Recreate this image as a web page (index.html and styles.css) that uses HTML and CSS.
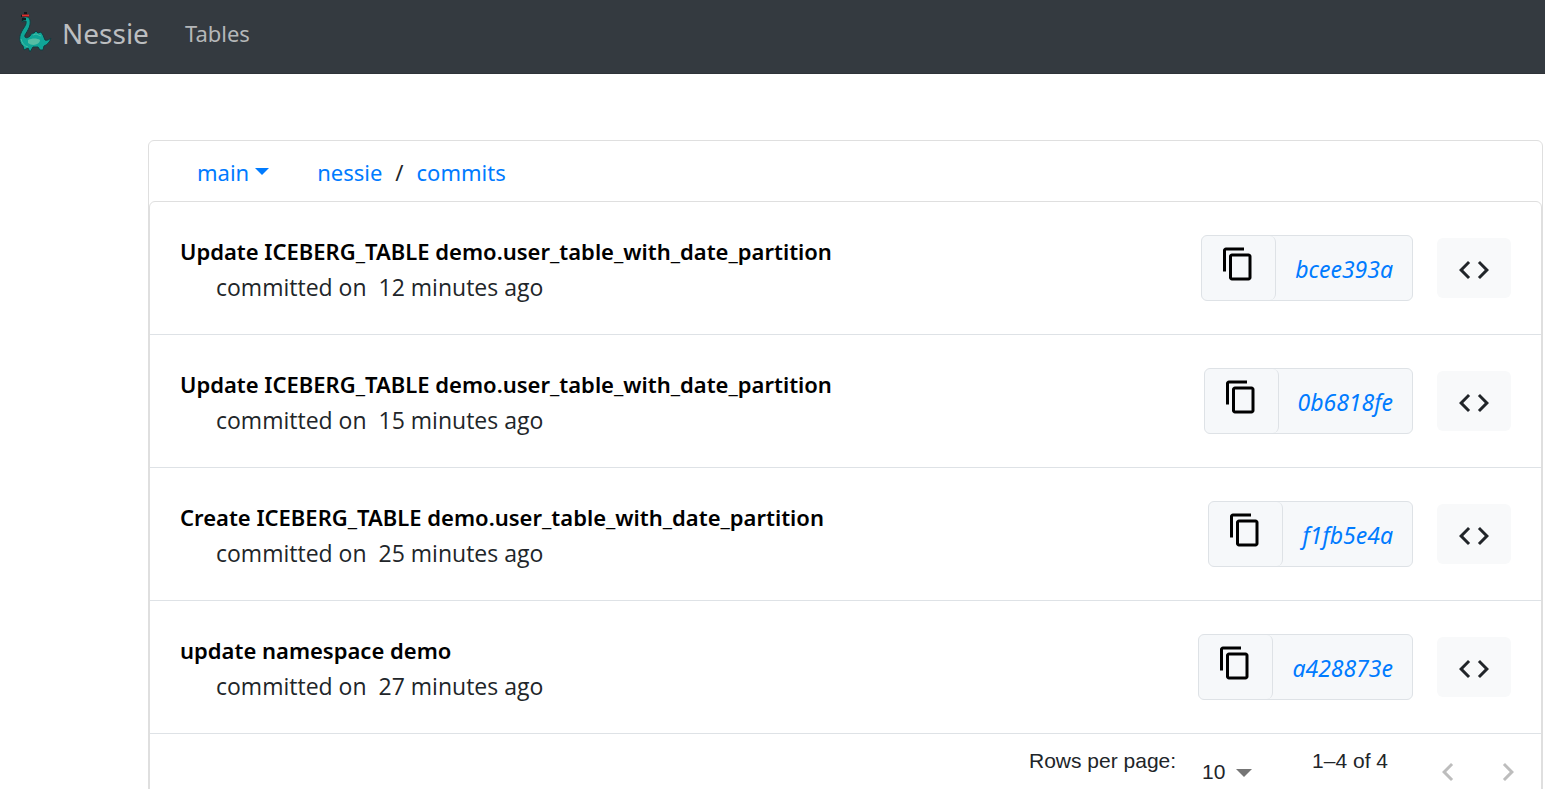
FILE: index.html
```html
<!DOCTYPE html>
<html lang="en">
<head>
<meta charset="utf-8">
<title>Nessie</title>
<link rel="stylesheet" href="styles.css">
</head>
<body>
<svg class="sprite" aria-hidden="true">
  <symbol id="copy" viewBox="0 0 24 24"><path d="M16 1H4c-1.100 0-2 .9-2 2v14h2V3h12V1zm3 4H8c-1.100 0-2 .9-2 2v14c0 1.100.9 2 2 2h11c1.100 0 2-.9 2-2V7c0-1.100-.9-2-2-2zm0 16H8V7h11v14z"/></symbol>
  <symbol id="code" viewBox="0 0 24 24"><path d="M9.400 16.600 4.800 12l4.600-4.600L8 6l-6 6 6 6 1.400-1.400zm5.200 0 4.600-4.600-4.600-4.600L16 6l6 6-6 6-1.400-1.400z"/></symbol>
</svg>
<nav class="navbar">
  <a class="brand" href="#">
    <svg class="logo" viewBox="0 0 36 44" aria-hidden="true">
      <path d="M6 8C8 5 13 5 14 9C15 15 12 19 9 24C8 27 11 28 14 25C15 23 16 22 18 22L20 20L22 22L25 21L27 24L29 29C31 30 34 28 35 27C34 31 31 34 28 35L27 39L24 39L22 36H17L14 41L12 37L8 39L7 35C3 32 3 26 5 22C7 17 11 14 10 10L6 11Z" fill="#10a597" stroke="#153c40" stroke-width="1"/>
      <path d="M12 29C16 27 21 27 24 29C24 33 17 36 12 32Z" fill="#55bda4"/>
      <path d="M5 28C6 32 8 35 12 36M17 24L20 23L25 25" fill="none" stroke="#48bba4" stroke-width="1"/>
      <path d="M5 4L8 3V1H11V3L13 4L13 6H5Z" fill="#14171b"/>
      <path d="M6 4.500H13" stroke="#df3030" stroke-width="2"/>
      <path d="M6 7H10V9L6 10Z" fill="#101b20"/>
    </svg>
    <span>Nessie</span>
  </a>
  <a class="nav-link" href="#">Tables</a>
</nav>
<main class="card">
  <header class="toolbar">
    <button class="branch" type="button">main<span class="caret"></span></button>
    <div class="crumbs"><a href="#">nessie</a><span class="slash">/</span><a href="#">commits</a></div>
  </header>
  <section class="commits">
    <article class="commit">
      <div class="info"><h2 class="title">Update ICEBERG_TABLE demo.user_table_with_date_partition</h2><p class="meta"><span>committed on</span><span>12 minutes ago</span></p></div>
      <div class="actions"><div class="hash-group"><button class="copy" type="button" aria-label="Copy hash"><svg><use href="#copy"/></svg></button><a class="hash" href="#">bcee393a</a></div><button class="browse" type="button" aria-label="Browse"><svg><use href="#code"/></svg></button></div>
    </article>
    <article class="commit">
      <div class="info"><h2 class="title">Update ICEBERG_TABLE demo.user_table_with_date_partition</h2><p class="meta"><span>committed on</span><span>15 minutes ago</span></p></div>
      <div class="actions"><div class="hash-group"><button class="copy" type="button" aria-label="Copy hash"><svg><use href="#copy"/></svg></button><a class="hash" href="#">0b6818fe</a></div><button class="browse" type="button" aria-label="Browse"><svg><use href="#code"/></svg></button></div>
    </article>
    <article class="commit">
      <div class="info"><h2 class="title">Create ICEBERG_TABLE demo.user_table_with_date_partition</h2><p class="meta"><span>committed on</span><span>25 minutes ago</span></p></div>
      <div class="actions"><div class="hash-group"><button class="copy" type="button" aria-label="Copy hash"><svg><use href="#copy"/></svg></button><a class="hash" href="#">f1fb5e4a</a></div><button class="browse" type="button" aria-label="Browse"><svg><use href="#code"/></svg></button></div>
    </article>
    <article class="commit">
      <div class="info"><h2 class="title">update namespace demo</h2><p class="meta"><span>committed on</span><span>27 minutes ago</span></p></div>
      <div class="actions"><div class="hash-group"><button class="copy" type="button" aria-label="Copy hash"><svg><use href="#copy"/></svg></button><a class="hash" href="#">a428873e</a></div><button class="browse" type="button" aria-label="Browse"><svg><use href="#code"/></svg></button></div>
    </article>
    <footer class="pagination">
      <label class="rows-label" for="rows">Rows per page:</label>
      <div class="select-wrap"><select id="rows"><option>10</option><option>25</option></select><span class="select-arrow"></span></div>
      <span class="range">1–4 of 4</span>
      <div class="pager">
        <button type="button" aria-label="Previous page" disabled><svg viewBox="0 0 24 24"><path d="M15.400 7.400 14 6l-6 6 6 6 1.400-1.400L10.800 12z"/></svg></button>
        <button type="button" aria-label="Next page" disabled><svg viewBox="0 0 24 24"><path d="M10 6 8.600 7.400l4.600 4.600-4.600 4.600L10 18l6-6z"/></svg></button>
      </div>
    </footer>
  </section>
</main>
</body>
</html>
```
FILE: styles.css
```css
* { box-sizing: border-box; }
body {
  margin: 0;
  overflow-x: hidden;
  background: #fff;
  color: #212529;
  font: 23px/36px "Segoe UI", "Noto Sans", sans-serif;
}
html { scrollbar-width: none; }
a { color: #007bff; text-decoration: none; }
button, select { margin: 0; padding: 0; border: 0; background: none; font: inherit; }
svg { display: block; fill: currentColor; }
.sprite { display: none; }
.navbar {
  display: flex;
  align-items: center;
  gap: 36px;
  height: 74px;
  padding: 0 16px 8px;
  background: #343a40;
  border-bottom: 1px solid #2e3338;
}
.brand { display: flex; align-items: center; gap: 10px; color: #bcbec0; font-size: 28px; }
.logo { width: 36px; height: 44px; }
.nav-link { color: #b4b7b9; font-size: 22px; }
.card {
  margin: 66px 2px 0 148px;
  border: 1px solid #dfdfdf;
  border-radius: 6px;
}
.toolbar { display: flex; align-items: center; gap: 48px; height: 60px; padding: 2px 48px 0; font-size: 22px; }
.branch { display: flex; align-items: center; gap: 6px; color: #007bff; }
.caret { margin-bottom: 2px; border: 7px solid transparent; border-top-color: currentColor; border-bottom: 0; }
.crumbs { display: flex; gap: 13px; }
.commits { border: 1px solid #dfdfdf; border-radius: 6px; }
.commit {
  display: flex;
  justify-content: space-between;
  align-items: flex-start;
  padding: 31px 30px 29px;
  border-bottom: 1px solid #dee2e6;
}
.title { margin: 0; color: #000; font-size: 22px; font-weight: 600; }
.meta { display: flex; gap: 12px; margin: 0; padding-left: 36px; font-family: "Segoe UI", "Open Sans", sans-serif; }
.actions { display: flex; align-items: center; gap: 24px; margin-top: 2px; }
.hash-group {
  display: flex;
  height: 66px;
  background: #f6f8fa;
  border: 1px solid #dee2e6;
  border-radius: 6px;
}
.copy {
  width: 74px;
  padding: 0 0 8px 18px;
  border-right: 1px solid #dee2e6;
  border-radius: 6px;
  color: #000;
}
.copy svg, .browse svg { width: 36px; height: 36px; }
.hash { padding: 15px 19px 0; font-style: italic; }
.browse {
  width: 74px;
  height: 60px;
  padding: 4px 0 0 19px;
  background: #f8f9fa;
  border-radius: 6px;
  color: #212529;
}
.pagination {
  display: flex;
  justify-content: flex-end;
  padding: 9px 15px 30px;
  font: 21px/36px "Liberation Sans", sans-serif;
}
.select-wrap { display: flex; align-items: center; gap: 10px; margin: 10px 60px 0 26px; }
select { appearance: none; color: #212529; }
.select-arrow { margin-top: 2px; border: 8px solid transparent; border-top-color: #757575; border-bottom: 0; }
.pager { display: flex; gap: 24px; margin: 11px 0 0 42px; }
.pager button { width: 36px; height: 36px; color: #bdbdbd; }
```
